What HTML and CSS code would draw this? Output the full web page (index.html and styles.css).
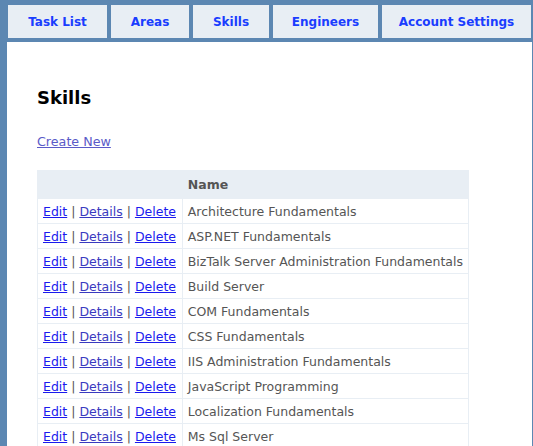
FILE: index.html
```html
<!DOCTYPE html>
<html>
<head>
<meta charset="utf-8">
<link rel="stylesheet" href="styles.css">
</head>
<body>
<nav class="tabs">
  <a class="tab t1" href="#">Task List</a>
  <a class="tab t2" href="#">Areas</a>
  <a class="tab t3" href="#">Skills</a>
  <a class="tab t4" href="#">Engineers</a>
  <a class="tab t5" href="#">Account Settings</a>
</nav>
<main class="page">
  <h2 class="title">Skills</h2>
  <p class="create"><a href="#">Create New</a></p>
  <table class="grid">
    <thead>
      <tr><th class="actions"></th><th class="name">Name</th></tr>
    </thead>
    <tbody>
      <tr><td class="actions"><a href="#">Edit</a> | <a class="v" href="#">Details</a> | <a href="#">Delete</a></td><td>Architecture Fundamentals</td></tr>
      <tr><td class="actions"><a href="#">Edit</a> | <a class="v" href="#">Details</a> | <a href="#">Delete</a></td><td>ASP.NET Fundamentals</td></tr>
      <tr><td class="actions"><a href="#">Edit</a> | <a class="v" href="#">Details</a> | <a href="#">Delete</a></td><td>BizTalk Server Administration Fundamentals</td></tr>
      <tr><td class="actions"><a href="#">Edit</a> | <a class="v" href="#">Details</a> | <a href="#">Delete</a></td><td>Build Server</td></tr>
      <tr><td class="actions"><a href="#">Edit</a> | <a class="v" href="#">Details</a> | <a href="#">Delete</a></td><td>COM Fundamentals</td></tr>
      <tr><td class="actions"><a href="#">Edit</a> | <a class="v" href="#">Details</a> | <a href="#">Delete</a></td><td>CSS Fundamentals</td></tr>
      <tr><td class="actions"><a href="#">Edit</a> | <a class="v" href="#">Details</a> | <a href="#">Delete</a></td><td>IIS Administration Fundamentals</td></tr>
      <tr><td class="actions"><a href="#">Edit</a> | <a class="v" href="#">Details</a> | <a href="#">Delete</a></td><td>JavaScript Programming</td></tr>
      <tr><td class="actions"><a href="#">Edit</a> | <a class="v" href="#">Details</a> | <a href="#">Delete</a></td><td>Localization Fundamentals</td></tr>
      <tr><td class="actions"><a href="#">Edit</a> | <a class="v" href="#">Details</a> | <a href="#">Delete</a></td><td>Ms Sql Server</td></tr>
    </tbody>
  </table>
</main>
</body>
</html>
```
FILE: styles.css
```css
html, body {
  margin: 0;
  padding: 0;
}
body {
  background: #5c87b2;
  font-family: "DejaVu Sans", Verdana, sans-serif;
  font-size: 12px;
  color: #555;
  overflow: hidden;
  height: 446px;
}
.tabs {
  display: flex;
  gap: 4px;
  padding: 5px 0 0 8px;
  height: 33px;
}
.tab {
  display: flex;
  align-items: center;
  justify-content: center;
  background: #e8eef4;
  color: #1a3dff;
  font-weight: bold;
  font-size: 12px;
  text-decoration: none;
  height: 33px;
  padding-top: 1px;
  box-sizing: border-box;
}
.t1 { width: 99px; }
.t2 { width: 78px; }
.t3 { width: 76px; }
.t4 { width: 105px; }
.t5 { width: 149px; }
.page {
  margin: 4px 0 0 7px;
  width: 494px;
  height: 600px;
  background: #fff;
  padding: 0 0 0 30px;
  border-right: 1px solid #fff;
}
.title {
  margin: 0;
  padding-top: 46px;
  font-size: 18px;
  line-height: 20px;
  color: #000;
  font-weight: bold;
}
.create {
  margin: 26px 0 0 0;
  line-height: 16px;
  font-size: 12.7px;
}
.create a {
  color: #5a5ac8;
}
.grid {
  margin-top: 20px;
  border-collapse: collapse;
  width: 432px;
}
.grid th {
  background: #e8eef4;
  height: 27px;
  text-align: left;
  padding: 0 5px;
  color: #555;
  font-size: 12.5px;
  border: 1px solid #e8eef4;
}
.grid th.actions { width: 135px; }
.grid td {
  height: 24px;
  padding: 0 5px;
  border: 1px solid #e8eef4;
  font-size: 12.5px;
  color: #555;
  white-space: nowrap;
}
.grid td a {
  color: #1a1aee;
}
.grid td a.v {
  color: #3a3ac0;
}
```
